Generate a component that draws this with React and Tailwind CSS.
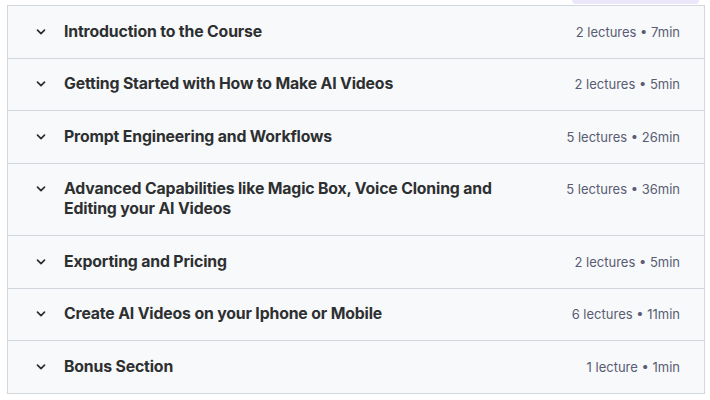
import React from "react";

const sections = [
  { title: "Introduction to the Course", meta: "2 lectures • 7min" },
  { title: "Getting Started with How to Make AI Videos", meta: "2 lectures • 5min" },
  { title: "Prompt Engineering and Workflows", meta: "5 lectures • 26min" },
  {
    title: "Advanced Capabilities like Magic Box, Voice Cloning and Editing your AI Videos",
    meta: "5 lectures • 36min",
  },
  { title: "Exporting and Pricing", meta: "2 lectures • 5min" },
  { title: "Create AI Videos on your Iphone or Mobile", meta: "6 lectures • 11min" },
  { title: "Bonus Section", meta: "1 lecture • 1min" },
];

function Chevron() {
  return (
    <svg width="12" height="8" viewBox="0 0 12 8" fill="none" className="shrink-0 mt-[6px]">
      <path d="M2.5 2.2l3.5 3.5 3.5-3.5" stroke="#2d2f31" strokeWidth="1.7" strokeLinecap="round" strokeLinejoin="round" />
    </svg>
  );
}

export default function App() {
  return (
    <div className="w-[710px] h-[400px] bg-white" style={{ fontFamily: "Inter, 'Noto Sans', sans-serif" }}>
      <div className="h-[5px] flex justify-end pr-[11px]">
        <div className="w-[127px] h-[4px] rounded-b-lg bg-[#ece6fa]"></div>
      </div>
      <div className="ml-[7px] w-[698px] border border-[#d1d7dc] divide-y divide-[#d1d7dc] bg-[#f7f9fa]">
        {sections.map((s) => (
          <div key={s.title} className="flex items-start pl-[27px] pr-6 py-[15.75px]">
            <Chevron />
            <div className="ml-[17px] flex-1 text-[15.8px] leading-5 font-bold text-[#2d2f31] tracking-[-0.15px]">
              {s.title}
            </div>
            <div className="ml-[48px] shrink-0 text-[13px] leading-5 text-[#595c73]">{s.meta}</div>
          </div>
        ))}
      </div>
    </div>
  );
}
